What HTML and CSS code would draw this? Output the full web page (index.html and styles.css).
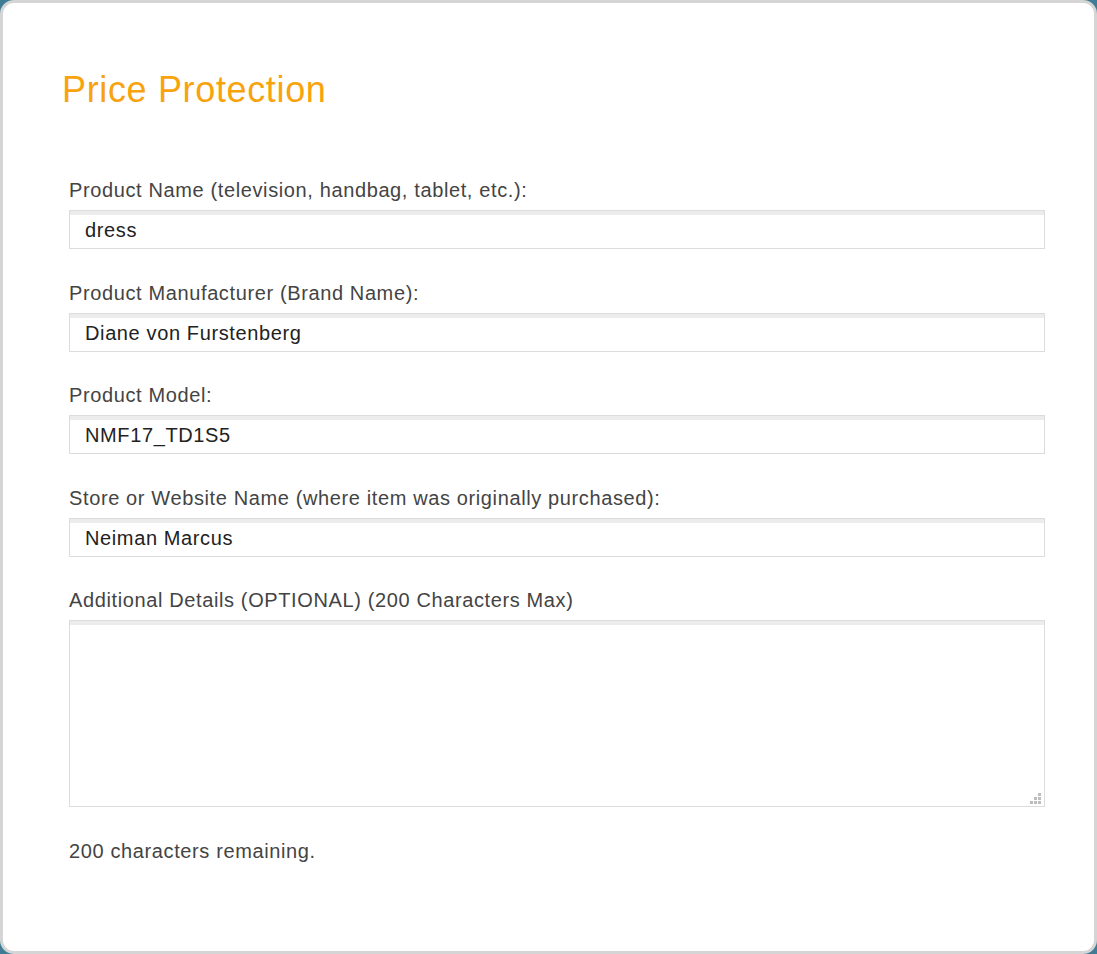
FILE: index.html
```html
<!DOCTYPE html>
<html lang="en">
<head>
  <meta charset="UTF-8">
  <meta name="viewport" content="width=device-width, initial-scale=1.0">
  <title>Price Protection</title>
  <link rel="stylesheet" href="styles.css">
</head>
<body>
  <div class="card">
    <h1>Price Protection</h1>

    <form class="claim-form">
      <div class="field">
        <label for="product-name">Product Name (television, handbag, tablet, etc.):</label>
        <input type="text" id="product-name" value="dress">
      </div>

      <div class="field">
        <label for="manufacturer">Product Manufacturer (Brand Name):</label>
        <input type="text" id="manufacturer" value="Diane von Furstenberg">
      </div>

      <div class="field">
        <label for="model">Product Model:</label>
        <input type="text" id="model" value="NMF17_TD1S5">
      </div>

      <div class="field">
        <label for="store">Store or Website Name (where item was originally purchased):</label>
        <input type="text" id="store" value="Neiman Marcus">
      </div>

      <div class="field">
        <label for="details">Additional Details (OPTIONAL) (200 Characters Max)</label>
        <div class="textarea-wrap">
          <textarea id="details" maxlength="200"></textarea>
          <svg class="grip" width="12" height="11" viewBox="0 0 12 11">
            <rect x="8" y="0" width="3" height="3" />
            <rect x="4" y="4" width="3" height="3" />
            <rect x="8" y="4" width="3" height="3" />
            <rect x="0" y="8" width="3" height="3" />
            <rect x="4" y="8" width="3" height="3" />
            <rect x="8" y="8" width="3" height="3" />
          </svg>
        </div>
      </div>

      <p class="remaining"><span id="remaining">200</span> characters remaining.</p>
    </form>
  </div>
</body>
</html>
```

FILE: styles.css
```css
body {
  margin: 0;
  background-color: #3f7d96;
  font-family: "Liberation Sans", Arial, sans-serif;
}
.card {
  box-sizing: border-box;
  height: 954px;
  background: #fff;
  border: 3px solid #d5d5d5;
  border-radius: 14px;
  padding: 66px 49px 0 59px;
}
h1 {
  margin: 0 0 70px 0;
  font-size: 36px;
  line-height: 41px;
  font-weight: normal;
  letter-spacing: 0.65px;
  color: #f8a30e;
}
.claim-form {
  margin-left: 7px;
}
.field {
  margin-bottom: 33.5px;
}
label {
  display: block;
  font-size: 20px;
  line-height: 20px;
  letter-spacing: 0.62px;
  color: #444;
  margin-bottom: 10px;
}
input[type="text"],
textarea {
  display: block;
  box-sizing: border-box;
  width: 100%;
  border: 1px solid #dcdcdc;
  box-shadow: inset 0 4px 0 #ececec;
  font-family: "Liberation Sans", Arial, sans-serif;
  font-size: 20px;
  letter-spacing: 0.62px;
  color: #222;
  outline: none;
  margin: 0;
}
input[type="text"] {
  height: 39px;
  padding: 2px 15px 0 15px;
}
.textarea-wrap {
  position: relative;
}
textarea {
  height: 187px;
  padding: 10px 15px;
  resize: none;
}
.grip {
  position: absolute;
  right: 3px;
  bottom: 3px;
  fill: #bdbdbd;
}
.remaining {
  margin: 0;
  font-size: 20px;
  line-height: 20px;
  letter-spacing: 0.62px;
  color: #444;
}
```
